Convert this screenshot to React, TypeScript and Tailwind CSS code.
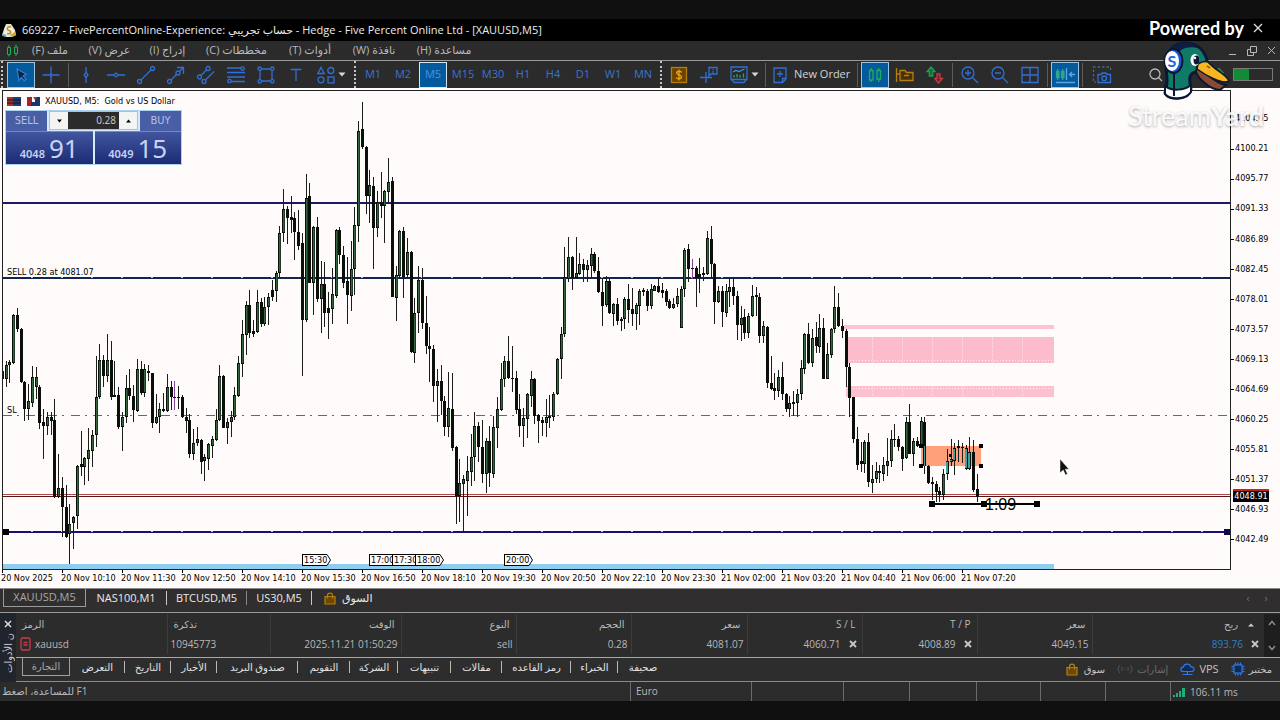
import React from "react";

/* high, body top, body bottom, low, kind: g = rising, b = falling, p = highlighted, t = inside the order block */
const CANDLES = `368 371 379 380 b|361 365 379 387 g|360 362 365 383 g|314 315 363 364 g|308 315 329 332 b|328 329 382 383 b|381 382 409 421 b|384 401 409 420 g|366 377 403 407 g|367 377 387 399 g|385 387 423 429 b|409 422 426 459 b|412 417 426 435 g|412 417 421 435 b|399 420 497 498 b|454 488 497 498 g|477 488 507 537 b|485 507 537 538 b|504 524 534 564 g|516 517 523 549 g|465 466 516 529 g|431 464 467 476 b|457 458 467 485 g|428 450 459 481 g|430 435 451 467 g|356 397 435 447 g|344 360 397 399 g|355 360 376 387 b|334 360 376 382 g|341 360 397 400 b|361 395 397 397 b|387 395 427 429 b|412 417 427 451 g|375 388 417 423 g|369 388 396 400 b|385 396 410 422 b|359 369 411 412 g|361 369 393 395 b|364 369 393 397 g|365 371 373 381 b|373 373 423 428 b|394 417 423 424 g|403 409 417 433 g|393 409 411 412 b|374 387 411 412 g|381 387 397 410 b|381 397 398 410 p|386 397 398 409 b|395 397 417 418 b|408 417 421 433 b|414 420 454 458 b|429 443 454 460 g|427 439 443 446 g|439 440 462 474 b|454 457 461 481 g|443 444 459 470 g|436 439 446 458 g|409 420 440 441 g|365 376 420 421 g|375 376 428 428 b|418 422 428 444 g|411 417 422 437 g|387 395 417 420 g|356 363 396 397 g|320 334 364 377 g|301 305 335 355 g|290 305 333 338 b|320 331 334 337 b|290 302 332 333 g|298 302 324 327 b|297 307 324 326 g|293 297 307 325 g|280 290 297 301 b|271 273 291 302 g|226 233 273 277 g|189 209 233 242 g|206 209 218 244 b|196 217 220 233 b|212 218 232 260 b|210 232 246 250 b|233 243 320 376 b|174 198 320 322 g|183 196 283 283 b|226 227 283 315 g|217 227 299 302 b|261 284 299 333 g|262 284 313 327 b|292 308 313 339 b|268 294 309 324 g|229 230 296 298 g|227 230 255 264 b|246 255 283 288 b|257 281 295 324 b|241 269 296 311 g|207 225 269 295 g|121 131 226 242 g|102 129 147 149 b|146 147 196 214 b|170 185 196 223 g|177 186 228 269 b|191 202 228 237 g|172 202 206 218 b|190 191 206 243 g|158 182 192 202 g|177 181 297 297 b|266 275 298 321 g|230 231 276 279 g|227 231 277 298 b|238 252 275 277 g|251 252 352 353 b|298 313 353 363 g|266 280 313 333 g|268 280 323 329 b|296 323 346 354 b|327 346 349 382 b|345 349 386 402 b|369 381 386 422 g|365 381 401 415 b|396 401 427 436 b|372 408 427 437 g|373 409 448 451 b|446 447 496 524 b|459 483 496 522 g|475 479 484 531 g|456 471 481 516 g|434 457 472 486 g|412 426 457 481 g|422 426 447 462 b|420 447 474 483 b|438 441 474 493 g|426 441 473 487 b|416 427 474 478 g|397 409 428 448 g|363 379 410 411 g|356 361 379 387 g|336 361 378 379 b|346 378 379 392 b|371 378 410 414 b|394 409 426 437 b|408 418 426 447 g|393 394 419 438 g|371 379 396 407 g|378 379 416 424 b|414 415 421 443 b|417 420 423 436 b|399 417 423 437 g|395 416 418 428 b|392 394 417 421 g|358 359 394 395 g|327 334 359 379 g|247 277 334 337 g|237 257 279 282 g|256 257 278 290 b|237 273 278 279 g|253 264 274 275 g|259 264 270 282 b|260 265 270 282 g|248 254 266 277 g|252 254 271 273 b|257 271 292 293 b|279 292 306 326 b|276 281 305 307 g|278 281 313 314 b|303 304 314 326 g|298 304 321 325 b|317 319 321 331 b|297 299 319 329 g|284 299 310 323 b|288 309 314 326 b|303 305 314 330 g|289 291 306 325 g|288 290 292 296 b|289 291 306 311 b|284 289 306 309 g|285 286 291 291 g|278 286 292 293 b|283 290 293 298 b|289 291 302 306 b|299 301 308 309 b|298 304 308 309 g|288 296 304 307 g|286 289 328 328 g|248 250 289 297 g|244 249 269 282 b|259 268 269 279 p|266 268 278 307 b|258 274 278 293 b|267 273 275 281 b|231 238 274 275 g|226 239 264 278 b|263 264 302 324 b|286 291 302 303 g|286 291 312 327 b|284 291 313 317 g|278 287 292 307 g|278 287 296 305 b|291 296 325 340 b|306 318 325 341 g|309 317 333 339 b|313 316 333 338 g|285 296 316 317 g|287 295 297 316 b|293 297 336 343 b|321 326 336 343 g|326 327 383 388 b|356 383 389 390 b|373 388 391 400 b|370 377 391 397 g|362 377 394 400 b|393 394 409 412 b|396 403 409 417 g|391 402 404 416 b|389 394 403 417 g|360 368 394 400 g|333 334 369 374 g|323 334 363 364 b|329 338 363 367 g|322 337 346 353 b|314 328 347 353 g|318 328 379 379 b|343 354 379 379 g|328 329 355 358 g|286 307 329 333 g|293 307 326 327 b|319 326 331 338 b|329 331 367 387 b|363 367 398 417 b|397 397 439 443 b|427 439 465 470 b|442 461 464 472 b|440 442 464 473 g|433 442 482 487 b|465 479 483 493 g|462 471 479 483 g|465 471 473 483 b|457 465 474 481 g|438 461 466 476 g|430 439 461 467 g|424 439 440 447 b|436 439 447 451 b|446 447 459 471 b|417 422 458 459 g|404 422 454 454 b|438 441 454 466 g|437 441 446 447 b|417 421 445 445 g|417 422 466 474 b|465 466 483 484 b|477 482 484 500 b|481 484 492 502 b|487 491 495 502 b|469 474 495 500 g|449 461 474 480 t|439 459 462 466 t|443 448 461 475 t|440 446 448 462 b|443 447 448 463 b|445 448 469 470 t|437 452 469 470 t|440 452 490 492 b|474 489 497 502 b`
  .split("|")
  .map((row) => row.split(" "));

const FILL: Record<string, string> = { g: "#35663e", b: "#000000", p: "#8a3f9a", t: "#3aa3a3" };

const PRICES = ["4104.65", "4100.21", "4095.77", "4091.33", "4086.89", "4082.45", "4078.01", "4073.57", "4069.13", "4064.69", "4060.25", "4055.81", "4051.37", "4046.93", "4042.49"];

const TIMES = ["20 Nov 2025", "20 Nov 10:10", "20 Nov 11:30", "20 Nov 12:50", "20 Nov 14:10", "20 Nov 15:30", "20 Nov 16:50", "20 Nov 18:10", "20 Nov 19:30", "20 Nov 20:50", "20 Nov 22:10", "20 Nov 23:30", "21 Nov 02:00", "21 Nov 03:20", "21 Nov 04:40", "21 Nov 06:00", "21 Nov 07:20"];

const MENU = [
  { label: "ملف (F)", w: "w-[58px]" },
  { label: "عرض (V)", w: "w-[61px]" },
  { label: "إدراج (I)", w: "w-[55px]" },
  { label: "مخططات (C)", w: "w-[83px]" },
  { label: "أدوات (T)", w: "w-[64px]" },
  { label: "نافذة (W)", w: "w-[64px]" },
  { label: "مساعدة (H)", w: "w-[76px]" },
];

const TOOL_TABS = [
  { label: "التعرض", w: "w-[55px]" },
  { label: "التاريخ", w: "w-[46px]" },
  { label: "الأخبار", w: "w-[46px]" },
  { label: "صندوق البريد", w: "w-[81px]" },
  { label: "التقويم", w: "w-[52px]" },
  { label: "الشركة", w: "w-[48px]" },
  { label: "تنبيهات", w: "w-[53px]" },
  { label: "مقالات", w: "w-[51px]" },
  { label: "رمز القاعده", w: "w-[69px]" },
  { label: "الخبراء", w: "w-[47px]" },
  { label: "صحيفة", w: "w-[50px]" },
];

const FLAGS = [
  { t: "15:30", x: 299 },
  { t: "17:00", x: 366 },
  { t: "17:30", x: 389 },
  { t: "18:00", x: 412 },
  { t: "20:00", x: 501 },
];

const BLUE = "#2f6fd6";

function Icon({ children, color = BLUE, w = 20, fill = "none" }: { children: React.ReactNode; color?: string; w?: number; fill?: string }) {
  return (
    <svg width={w} height="20" viewBox={`0 0 ${w} 20`} fill={fill} stroke={color} strokeWidth="1.3" className="shrink-0" aria-hidden="true">
      {children}
    </svg>
  );
}

function Tool({ label, active, children }: { label: string; active?: boolean; children: React.ReactNode }) {
  return (
    <button
      aria-label={label}
      className={
        active
          ? "mx-px flex h-[26px] w-7 shrink-0 items-center justify-center border border-[#9cc4e4] bg-[#055a9c]"
          : "flex h-[26px] w-[30px] shrink-0 items-center justify-center"
      }
    >
      {children}
    </button>
  );
}

function Frame({ label, active }: { label: string; active?: boolean }) {
  return (
    <button
      className={
        active
          ? "mx-px h-[26px] w-7 shrink-0 border border-[#d4e6f4] bg-[#055a9c] text-[11px] text-[#4a90e8]"
          : "h-[26px] w-[30px] shrink-0 text-[11px] text-[#3b74d0]"
      }
    >
      {label}
    </button>
  );
}

const Sep = () => <span className="mx-0.5 h-6 w-px shrink-0 bg-[#5c5c5c]" />;
const Grip = () => <span className="mx-0.5 h-[27px] w-0 shrink-0 border-l-2 border-dotted border-[#c8c8c8]" />;
const Caret = () => (
  <svg width="8" height="5" viewBox="0 0 8 5" className="-ml-[3px] shrink-0" aria-hidden="true">
    <path d="M0.5 0.5H7.5L4 4.5Z" fill="#d8d8d8" />
  </svg>
);

function Bag() {
  return (
    <svg width="12" height="13" viewBox="0 0 12 13" fill="#6b4700" stroke="#b87e0c" strokeWidth="1.2" aria-hidden="true">
      <path d="M1 4.5H11V12H1Z" />
      <path d="M3.5 6.5V3.2C3.5 0.3 8.5 0.3 8.5 3.2V6.5" fill="none" />
    </svg>
  );
}

function Toolbar() {
  return (
    <div className="flex h-[27px] items-center overflow-hidden bg-[#2b2b2b] pl-px">
      <span className="h-[27px] w-0 shrink-0 border-l-2 border-dotted border-[#c8c8c8]" />
      <span className="w-[3px] shrink-0" />
      <Tool label="Cursor" active>
        <Icon color="#2f7ad8"><path d="M6 4L8 15.500L10.300 12.600L13.300 15.800L15.200 14L12.200 11L15.200 9.300Z" fill="#0d2238" /></Icon>
      </Tool>
      <Tool label="Crosshair"><Icon><path d="M10 1.500V8M10 12V18.500M1.500 10H8M12 10H18.500M8.500 10L10 8.500L11.500 10L10 11.500Z" /></Icon></Tool>
      <Sep />
      <Tool label="Vertical line"><Icon><path d="M10 2V7.500M10 12.500V18" /><path d="M10 7.500L12 10L10 12.500L8 10Z" /></Icon></Tool>
      <Tool label="Horizontal line"><Icon><path d="M1 10H7.500M12.500 10H19" /><path d="M7.500 10L10 8L12.500 10L10 12Z" /></Icon></Tool>
      <Tool label="Trendline"><Icon><circle cx="3.500" cy="16.500" r="2" /><circle cx="16.500" cy="3.500" r="2" /><path d="M5 15L15 5" /></Icon></Tool>
      <Tool label="Arrow line"><Icon><circle cx="3.500" cy="16.500" r="2" /><circle cx="12" cy="8" r="2" /><path d="M5 15L10.500 9.500M13.500 6.500L18 2M11 2.500H17.500V9" /></Icon></Tool>
      <Tool label="Channel"><Icon><circle cx="3.500" cy="12" r="2" /><circle cx="12" cy="3.500" r="2" /><circle cx="8" cy="16.500" r="2" /><path d="M5 10.500L10.500 5M9.500 15L18 6.500" /></Icon></Tool>
      <Tool label="Fibonacci"><Icon><path d="M1 3H15M1 7.500H19M1 12H19M5 16.500H19" /><circle cx="16.500" cy="3.500" r="1.700" /><circle cx="3.500" cy="16" r="1.700" /></Icon></Tool>
      <Tool label="Rectangle"><Icon><path d="M5.500 4H14.500M5.500 16H14.500M4 5.500V14.500M16 5.500V14.500" /><circle cx="3.700" cy="3.700" r="1.700" /><circle cx="16.300" cy="3.700" r="1.700" /><circle cx="3.700" cy="16.300" r="1.700" /><circle cx="16.300" cy="16.300" r="1.700" /></Icon></Tool>
      <Tool label="Text"><Icon><path d="M4.500 4.500H15.500M10 4.500V16" /></Icon></Tool>
      <Tool label="Shapes"><Icon><path d="M5 2.500L8.200 8.500H1.800Z" /><circle cx="14.800" cy="5.500" r="3" /><circle cx="5" cy="14.800" r="3" /><rect x="12" y="12" width="6" height="6" /></Icon></Tool>
      <Caret />
      <span className="w-1.5 shrink-0" />
      <Grip />
      {["M1", "M2", "M5", "M15", "M30", "H1", "H4", "D1", "W1", "MN"].map((f) => (
        <Frame key={f} label={f} active={f === "M5"} />
      ))}
      <Grip />
      <Tool label="Accounts">
        <Icon color="#b87e0c"><rect x="2.500" y="2.500" width="15" height="15" fill="#6b4400" /><path d="M12.500 7.500C12 5.800 7.700 5.700 7.700 8C7.700 10.300 12.500 9.500 12.500 12C12.500 14.300 8 14.200 7.300 12.500M10 4.500V15.500" stroke="#eda41c" /></Icon>
      </Tool>
      <Tool label="Data window"><Icon><path d="M7 7V18M1 12.500H13M10 2.500H18V9H12L10 11Z" /><path d="M14 4V5M14 6V8" /></Icon></Tool>
      <Tool label="Indicators"><Icon><path d="M2 2H18V14.500H2ZM3 15L5 17.500H15L17 15" /><path d="M4 7L7 5.500L10 6.500L15.500 4" stroke="#3f9ad0" /><path d="M5 12.500V10M8 12.500V9M11 12.500V10M14.500 12.500V8.500" stroke="#23a860" /></Icon></Tool>
      <Caret />
      <span className="w-1 shrink-0" />
      <Sep />
      <button className="flex h-[26px] w-[87px] shrink-0 items-center gap-1 pl-0.5 text-[11px] text-[#d4d4d4]">
        <Icon><path d="M4 3H16V14L12.500 17.500H4ZM16 13.500H12.500V17.500M10 6V12M7 9H13" /></Icon>
        <span className="whitespace-nowrap">New Order</span>
      </button>
      <Sep />
      <Tool label="Candlesticks" active>
        <Icon color="#1fae5c"><path d="M4.500 5.500H8V15H4.500ZM12 5.500H15.500V14H12ZM6.200 3V5.500M6.200 15V17M13.700 3V5.500M13.700 14V17" /></Icon>
      </Tool>
      <Tool label="Templates"><Icon color="#b87e0c"><path d="M1.500 3V17M1.500 9H5" /><path d="M5 5.500H10L11.500 7.500H18V15.500H5ZM9 10.500H14" fill="#4a3208" /></Icon></Tool>
      <Tool label="Trade levels">
        <Icon color="#1f9a50"><path d="M6 2L10 6.500H7.700V11H4.300V6.500H2Z" fill="#1b6a3a" /><path d="M13.500 18L9.800 13.500H12V9H15V13.500H17.500Z" stroke="#c63c44" fill="#6a2026" /></Icon>
      </Tool>
      <Sep />
      <Tool label="Zoom in"><Icon><circle cx="8" cy="8" r="6" /><path d="M12.500 12.500L18 18M8 5V11M5 8H11" /></Icon></Tool>
      <Tool label="Zoom out"><Icon><circle cx="8" cy="8" r="6" /><path d="M12.500 12.500L18 18M5 8H11" /></Icon></Tool>
      <Tool label="Tile windows"><Icon><path d="M2 2.500H18V17.500H2ZM10 2.500V17.500M2 10H18" /></Icon></Tool>
      <Sep />
      <Tool label="Chart shift" active>
        <Icon color="#2aa88c" w={22}><path d="M2.500 6.500H5V12.500H2.500ZM7.500 6.500H10V12.500H7.500ZM3.700 4V15M8.700 4V15" /><path d="M12.500 3V15M21 9.500H15.500M18 7L15.500 9.500L18 12M2 17.500H21" stroke="#5fa4e8" /></Icon>
      </Tool>
      <Sep />
      <span className="w-0.5 shrink-0" />
      <Tool label="Screenshot">
        <Icon><path d="M1.500 7V2H18.500V7M1.500 9V17H4" strokeDasharray="2.500 2" stroke="#4a6690" /><path d="M6 9.500H9L10.200 8H14L15.200 9.500H18.500V17.500H6Z" /><circle cx="12.200" cy="13.300" r="2.300" /></Icon>
      </Tool>
      <span className="flex-1" />
      <button aria-label="Search" className="mr-12 flex items-center">
        <Icon color="#b8b8b8" w={18}><circle cx="8" cy="9" r="5" /><path d="M11.500 12.500L15 16" /></Icon>
      </button>
      <svg width="12" height="16" viewBox="0 0 12 16" className="mr-2 shrink-0" aria-hidden="true">
        <path d="M6 1L10.500 6H8V10H4V6H1.500Z" fill="#1b6a3a" stroke="#1f9a50" />
      </svg>
      <span className="mr-[7px] flex h-[13px] w-10 shrink-0 border border-[#7a7a7a]"><span className="w-[15px] bg-[#138a35]" /></span>
    </div>
  );
}

function OneClick() {
  return (
    <div className="absolute left-0.5 top-[19px] flex w-[177px] flex-col border border-[#a9d3f3] bg-[#d6ecfb]">
      <div className="flex h-5 items-stretch">
        <button className="w-[41px] shrink-0 bg-[#495fa5] text-[11px] text-[#b6bfe6]">SELL</button>
        <div className="mx-0.5 mb-px flex min-w-0 flex-1 border border-[#bcbcbc]">
          <button aria-label="Decrease volume" className="flex w-[18px] shrink-0 items-center justify-center bg-[#f4f4f4]"><svg width="5" height="4" viewBox="0 0 5 4"><path d="M0 0.500H5L2.500 3.500Z" /></svg></button>
          <input aria-label="Volume" defaultValue="0.28" className="w-0 min-w-0 flex-1 bg-[#2b2b2b] pr-[3px] text-right text-[10px] text-[#c4c4c4] outline-none [font-family:'Noto_Sans',sans-serif]" />
          <button aria-label="Increase volume" className="flex w-[18px] shrink-0 items-center justify-center bg-[#f4f4f4]"><svg width="5" height="4" viewBox="0 0 5 4"><path d="M0 3.500H5L2.500 0.500Z" /></svg></button>
        </div>
        <button className="w-[41px] shrink-0 bg-[#495fa5] text-[11px] text-[#b6bfe6]">BUY</button>
      </div>
      <div className="flex h-[33px] gap-0.5 text-[#c9d2f2] [font-family:'Noto_Sans',sans-serif]">
        <div className="flex flex-1 items-baseline justify-center gap-1 border-t border-[#7486c4] bg-gradient-to-b from-[#41569f] to-[#1c2b74]">
          <span className="text-[11px] font-semibold">4048</span>
          <span className="text-[26px] leading-8">91</span>
        </div>
        <div className="flex flex-1 items-baseline justify-center gap-1 border-t border-[#7486c4] bg-gradient-to-b from-[#41569f] to-[#1c2b74]">
          <span className="text-[11px] font-semibold">4049</span>
          <span className="text-[26px] leading-8">15</span>
        </div>
      </div>
    </div>
  );
}

function Chart() {
  const breaks = Array.from({ length: 40 }, (_, k) => 32 + 30 * k);
  return (
    <main className="flex flex-1 flex-col bg-[#fffbfb] pl-0.5 pt-0.5 text-[9px] text-black [font-family:'DejaVu_Sans_Condensed','DejaVu_Sans',sans-serif]">
      <div className="flex flex-1">
        <div className="relative h-[480px] min-w-0 flex-1 overflow-hidden border border-[#222]">
          <svg className="absolute inset-0 h-full w-full" shapeRendering="crispEdges" role="img" aria-label="XAUUSD five minute candlestick chart">
            <g transform="translate(-3,-91)">
              <rect x="3" y="564" width="1051" height="5" fill="#8fcdf0" />
              <rect x="844" y="325" width="210" height="4" fill="#fdc3d0" />
              <rect x="845" y="337" width="209" height="26" fill="#fdbccb" />
              <rect x="846" y="386" width="208" height="11" fill="#fcc0ce" />
              <path d="M847 360.500H1054M847 388.500H1054" stroke="#fff" strokeOpacity=".7" strokeDasharray="1 2" />
              <path d="M872.500 337V397M902.500 337V397M932.500 337V397M962.500 337V397M992.500 337V397M1022.500 337V397" stroke="#fff" strokeOpacity=".35" strokeDasharray="3 1" />
              <rect x="921" y="446" width="60" height="20" fill="#ffa07a" />
            </g>
            <rect x="0" y="111" width="100%" height="2" fill="#1b1a66" />
            <rect x="0" y="186" width="100%" height="2" fill="#10264e" />
            <rect x="0" y="403" width="100%" height="1" fill="#b04848" />
            <rect x="0" y="405" width="100%" height="1" fill="#5a1414" />
            <rect x="0" y="440" width="100%" height="2" fill="#1c0c78" />
            <line x1="0" y1="324.500" x2="100%" y2="324.500" stroke="#c43c50" strokeDasharray="9 5 2 6.500" />
            <g transform="translate(-3,-91)">
              {breaks.map((x) => (
                <path key={x} d={`M${x - 1} 277.500H${x + 1}M${x - 1} 531.500H${x + 1}`} stroke="#fff" strokeOpacity=".75" />
              ))}
              {CANDLES.map(([h, t, b, l, kind], i) => {
                const x = Math.floor(2.3 + 3.75 * i);
                const top = Number(t);
                const height = Math.max(1, Number(b) - top);
                return (
                  <g key={i}>
                    <rect x={x} y={h} width="1" height={Number(l) - Number(h)} fill={kind === "p" ? "#8a3f9a" : "#1c1c1c"} />
                    <rect x={x - 1} y={top} width="3" height={height} fill="#0a0f0a" />
                    {kind !== "b" && height > 2 && <rect x={x} y={top + 1} width="1" height={height - 2} fill={FILL[kind]} />}
                    {kind === "g" && height > 6 && <rect x={x + 1} y={top + 1} width="1" height={height - 2} fill="#1d3a24" />}
                    {kind === "t" && <rect x={x - 1} y={top + 1} width="2" height={Math.max(1, height - 2)} fill={FILL.t} />}
                  </g>
                );
              })}
              <rect x="924" y="446" width="1" height="20" fill="#3aa3a3" />
              <path d="M919 444h4v4h-4zM979 444h4v4h-4zM919 464h4v4h-4zM979 464h4v4h-4zM949 454h3v3h-3z" />
              <rect x="932" y="503" width="105" height="2" />
              <path d="M929 501h6v6h-6zM981 501h6v6h-6zM1034 501h6v6h-6zM3 529h6v6H3z" />
              <path d="M1060 459V473L1063.200 470L1065.500 475L1067.500 474L1065.300 469.200H1069Z" fill="#111" stroke="#fff" strokeWidth=".5" shapeRendering="auto" />
            </g>
          </svg>
          <span className="absolute right-0 top-[438px] size-1.5 bg-[#0c0a48]" />
          {FLAGS.map((f) => (
            <span key={f.t} className="absolute top-[463px] flex h-3" style={{ left: f.x }}>
              <span className="border border-r-0 border-black bg-[#fffbfb] pl-px leading-[10px]">{f.t}</span>
              <svg width="4" height="12" viewBox="0 0 4 12"><path d="M0 0.500L3.500 6L0 11.500" fill="#fffbfb" stroke="#000" /></svg>
            </span>
          ))}
          <div className="absolute left-1 top-1 flex items-center gap-1 leading-3">
            <svg width="34" height="9" viewBox="0 0 34 9" aria-hidden="true">
              <rect width="14" height="9" fill="#1c3f7c" /><rect width="6" height="9" fill="#a5342c" /><path d="M0 3H14M0 6H14" stroke="#161616" />
              <rect x="20" width="5" height="9" fill="#a5242c" /><rect x="28" width="5" height="9" fill="#17386e" /><rect x="24" y="5" width="6" height="4" fill="#17386e" /><path d="M26 0L28 3L30 0Z" fill="#c03030" />
            </svg>
            <span className="whitespace-pre text-[9px]">XAUUSD, M5:  Gold vs US Dollar</span>
          </div>
          <OneClick />
          <span className="absolute left-1 top-[175px] leading-3">SELL 0.28 at 4081.07</span>
          <span className="absolute left-1 top-[313px] leading-3">SL</span>
          <span className="absolute left-[982px] top-[405px] text-[16px] leading-[18px] [font-family:'Liberation_Sans',sans-serif]">1:09</span>
        </div>
        <div className="relative w-[49px] shrink-0">
          <div className="mt-3.5 flex h-[451px] flex-col">
            {PRICES.map((p) => (
              <span key={p} className="flex flex-1 items-center gap-px">
                <span className="h-px w-[3px] bg-black" />
                {p}
              </span>
            ))}
          </div>
          <span className="absolute left-0.5 top-[399px] h-[13px] w-9 border-t-2 border-[#c82020] bg-black text-center leading-[11px] text-white">4048.91</span>
        </div>
      </div>
      <div className="flex h-[18px]">
        {TIMES.map((t) => (
          <span key={t} className="w-[60px] shrink-0 whitespace-nowrap">
            <span className="block h-[3px] w-px bg-black" />
            <span className="-ml-px block leading-[11px]">{t}</span>
          </span>
        ))}
      </div>
    </main>
  );
}

function ChartTabs() {
  return (
    <nav className="flex h-[25px] items-start border-b border-t border-b-[#9a9a9a] border-t-[#8a8a8a] bg-[#302e2e] pl-[3px] text-[11px] text-[#eaeaea]">
      <button className="h-[18px] w-[83px] border border-t-0 border-[#9a9a9a] text-[#a8a8a8]">XAUUSD,M5</button>
      <button className="h-[18px] w-20">NAS100,M1</button>
      <span className="mt-0.5 h-3.5 w-px bg-[#c8c8c8]" />
      <button className="h-[18px] w-[79px]">BTCUSD,M5</button>
      <span className="mt-0.5 h-3.5 w-px bg-[#888]" />
      <button className="h-[18px] w-16">US30,M5</button>
      <span className="mt-0.5 h-3.5 w-px bg-[#c8c8c8]" />
      <button className="flex h-[18px] items-center gap-1.5 pl-3"><Bag />السوق</button>
      <span className="flex-1" />
      <button aria-label="Scroll tabs left" className="w-5 text-[10px] leading-[18px] text-[#777]">‹</button>
      <button aria-label="Scroll tabs right" className="mr-1.5 w-4 text-[10px] leading-[18px] text-[#777]">›</button>
    </nav>
  );
}

const TH = "h-5 border-r border-[#3c3c3c] pr-1.5 text-right font-normal";
const TD = "h-5 border-r border-[#3c3c3c] pr-[3px] text-right";

function Close({ label }: { label: string }) {
  return (
    <button aria-label={label} className="ml-2 mr-0.5">
      <svg width="8" height="8" viewBox="0 0 8 8"><path d="M1 1L7 7M7 1L1 7" stroke="#c8c8c8" strokeWidth="1.800" /></svg>
    </button>
  );
}

function Toolbox() {
  return (
    <section className="flex h-[69px] bg-[#2c2c2c]">
      <div className="flex w-4 shrink-0 flex-col items-center bg-[#20242c] pt-1.5">
        <button aria-label="Close toolbox" className="mb-1 flex h-2.5 items-center">
          <svg width="8" height="8" viewBox="0 0 8 8"><path d="M1 1L7 7M7 1L1 7" stroke="#e8e8e8" strokeWidth="1.400" /></svg>
        </button>
        <div className="flex h-[45px] items-start overflow-hidden">
          <span dir="rtl" className="rotate-180 whitespace-nowrap text-[10px] leading-4 text-[#c8ccd4] [writing-mode:vertical-rl]">ن الأدوات</span>
        </div>
      </div>
      <div className="flex min-w-0 flex-1 flex-col">
        <div className="flex h-[45px] border-b border-[#a8a8a8] pt-px">
          <table className="h-10 flex-1 table-fixed border-collapse text-[10px] text-[#b8b8b8]">
            <colgroup>
              <col className="w-[151px]" /><col className="w-[103px]" /><col className="w-[131px]" /><col className="w-[115px]" /><col className="w-[115px]" />
              <col className="w-[116px]" /><col className="w-[115px]" /><col className="w-[115px]" /><col className="w-[115px]" /><col />
            </colgroup>
            <thead>
              <tr>
                <th className="h-5 border-r border-[#3c3c3c] pl-1.5 text-left font-normal">الرمز</th>
                <th className="h-5 border-r border-[#3c3c3c] pl-1.5 text-left font-normal">تذكرة</th>
                <th className={TH}>الوقت</th>
                <th className={TH}>النوع</th>
                <th className={TH}>الحجم</th>
                <th className={TH}>سعر</th>
                <th className={TH}>S / L</th>
                <th className={TH}>T / P</th>
                <th className={TH}>سعر</th>
                <th className="h-5 pr-2.5 text-right font-normal">
                  <span className="mr-2.5">ربح</span>
                  <svg width="6" height="4" viewBox="0 0 6 4" className="inline-block align-middle"><path d="M0 3.500H6L3 0.500Z" fill="#d0d0d0" /></svg>
                </th>
              </tr>
            </thead>
            <tbody>
              <tr>
                <td className="h-5 border-r border-[#3c3c3c] pl-1 text-left">
                  <span className="flex items-center gap-1">
                    <svg width="11" height="14" viewBox="0 0 11 14" fill="none" stroke="#cc3a48" strokeWidth="1.300"><rect x="1" y="1" width="9" height="12" rx="1.500" /><path d="M3.500 5.500H7.500M3.500 8H7.500" /></svg>
                    xauusd
                  </span>
                </td>
                <td className="h-5 border-r border-[#3c3c3c] pl-[3px] text-left">10945773</td>
                <td className={TD}>2025.11.21 01:50:29</td>
                <td className={TD}>sell</td>
                <td className={TD}>0.28</td>
                <td className={TD}>4081.07</td>
                <td className={TD}>4060.71<Close label="Remove stop loss" /></td>
                <td className={TD}>4008.89<Close label="Remove take profit" /></td>
                <td className={TD}>4049.15</td>
                <td className="h-5 pr-[3px] text-right text-[#2e7fc8]">893.76<Close label="Close position" /></td>
              </tr>
            </tbody>
          </table>
          <div className="flex w-4 shrink-0 flex-col items-center justify-between bg-[#1e1e1e] py-1.5">
            <svg width="8" height="6" viewBox="0 0 8 6" fill="none" stroke="#8a8a8a" strokeWidth="1.500"><path d="M1 5L4 1.500L7 5" /></svg>
            <svg width="8" height="6" viewBox="0 0 8 6" fill="none" stroke="#8a8a8a" strokeWidth="1.500"><path d="M1 1L4 4.500L7 1" /></svg>
          </div>
        </div>
        <div className="flex h-6 items-start border-b border-[#8a8a8a] bg-[#2e2d2d] pl-1.5 text-[10px] text-[#e4e4e4]">
          <button className="h-[18px] w-12 shrink-0 border border-t-0 border-[#a0a0a0] text-[#a8a8a8]">التجارة</button>
          {TOOL_TABS.map((t, i) => (
            <React.Fragment key={t.label}>
              {i > 0 && <span className="-ml-px mt-[3px] h-3 w-px shrink-0 bg-[#b8b8b8]" />}
              <button className={`h-[18px] shrink-0 whitespace-nowrap ${t.w}`}>{t.label}</button>
            </React.Fragment>
          ))}
          <span className="flex-1" />
          <div className="flex h-[22px] items-center gap-3 pr-2 text-[10px] text-[#c4c4c4]">
            <button className="flex items-center gap-1.5"><Bag />سوق</button>
            <button className="flex items-center gap-1 text-[#6c6c6c]">
              <svg width="16" height="10" viewBox="0 0 16 10" fill="none" stroke="#555"><path d="M3 1C0.500 3 0.500 7 3 9M13 1C15.500 3 15.500 7 13 9M5.500 3C4.500 4 4.500 6 5.500 7M10.500 3C11.500 4 11.500 6 10.500 7M8 4.500V5.500" /></svg>
              إشارات
            </button>
            <button className="flex items-center gap-1 text-[11px]">
              <svg width="15" height="13" viewBox="0 0 15 13" fill="#0e2b5c" stroke="#2f78e0" strokeWidth="1.200"><path d="M3.500 8.500C0 8.500 0 4.500 3.300 4.200C4 0.300 10 0 10.800 3.800C15 3.500 15 8.500 11.500 8.500Z" /><path d="M7.500 8.500V11.500M2.500 11.500H12.500" /></svg>
              VPS
            </button>
            <button className="flex items-center gap-1">
              <svg width="14" height="14" viewBox="0 0 14 14" fill="#0e2b5c" stroke="#2f78e0" strokeWidth="1.200"><rect x="3" y="3" width="8" height="8" /><path d="M4.500 3V0.500M7 3V0.500M9.500 3V0.500M4.500 11V13.500M7 11V13.500M9.500 11V13.500M3 4.500H0.500M3 7H0.500M3 9.500H0.500M11 4.500H13.500M11 7H13.500M11 9.500H13.500" /></svg>
              مختبر
            </button>
          </div>
        </div>
      </div>
    </section>
  );
}

function StatusBar() {
  return (
    <footer className="flex h-[19px] items-stretch bg-[#2d2c2c] text-[10px] leading-[18px] text-[#b8b8b8]">
      <span className="flex-1 pl-0.5"><span dir="rtl" className="inline-block whitespace-nowrap">F1 للمساعدة، اضغط</span></span>
      <span className="w-[121px] border-l border-[#6c6c6c] pl-[5px]">Euro</span>
      <span className="w-[92px] border-l border-[#6c6c6c]" />
      <span className="w-[66px] border-l border-[#6c6c6c]" />
      <span className="w-[67px] border-l border-[#6c6c6c]" />
      <span className="w-16 border-l border-[#6c6c6c]" />
      <span className="w-[65px] border-l border-[#6c6c6c]" />
      <span className="w-[65px] border-l border-[#6c6c6c]" />
      <span className="flex w-[110px] items-center gap-1 border-l border-[#6c6c6c] pl-0.5 text-[10px]">
        <svg width="13" height="10" viewBox="0 0 13 10" fill="#1fae78"><path d="M0 8h2v2H0zM3 6h2v4H3zM6 4h2v6H6zM9 1h3v9H9z" /></svg>
        106.11 ms
      </span>
    </footer>
  );
}

function Watermark() {
  return (
    <div className="pointer-events-none absolute right-2.5 top-4 flex w-[142px] flex-col text-white [font-family:Lato,'Open_Sans',sans-serif]">
      <div className="ml-[21px] flex items-center gap-[9px]">
        <span className="whitespace-nowrap text-[18px] font-bold leading-6">Powered by</span>
        <svg width="10" height="10" viewBox="0 0 10 10"><path d="M1 1L9 9M9 1L1 9" stroke="#e0e0e0" strokeWidth="1.300" /></svg>
      </div>
      <svg width="70" height="62" viewBox="0 0 70 62" className="ml-8" aria-hidden="true">
        <path d="M6 26C7 9 16 3 25 3C36 3 44 9 47 20C47 28 40 30 33 33C28 36 30 42 31 50C28 60 9 61 5 53C8 44 7 38 6 26Z" fill="#0f7a68" stroke="#0b1733" strokeWidth="3" />
        <path d="M11 9C16 1 33 0 40 9C30 5 20 8 16 16Z" fill="#0e1d40" />
        <path d="M5 46C11 51 24 51 31 45L31 52C25 60 10 60 5 54Z" fill="#fff" stroke="#0b1733" strokeWidth="2" />
        <path d="M37 27C44 30 55 44 66 45L60 50C50 50 38 38 36 32Z" fill="#8a4a34" stroke="#0b1733" strokeWidth="2" />
        <path d="M38 24C43 21 47 20 50 24C56 31 65 33 69 41C62 45 44 34 37 29Z" fill="#fbb520" stroke="#0b1733" strokeWidth="1.500" />
        <path d="M47 26L50 28" stroke="#7a4a10" strokeWidth="1.500" />
        <ellipse cx="35" cy="20" rx="4.500" ry="6" fill="#fff" />
        <ellipse cx="36.500" cy="20" rx="3" ry="4.600" fill="#0b1733" />
        <circle cx="35" cy="18" r="1.200" fill="#fff" />
        <path d="M14 30V56" stroke="#0b1733" strokeWidth="2" />
        <ellipse cx="13.500" cy="21" rx="9" ry="12" fill="#1b57c8" stroke="#0b1733" strokeWidth="2" />
        <ellipse cx="12" cy="21" rx="7" ry="10" fill="#fff" />
        <text x="12" y="27" textAnchor="middle" fontSize="16" fontWeight="700" fill="#1d62e0" fontFamily="Lato, sans-serif">S</text>
      </svg>
      <span className="whitespace-nowrap text-[27px] leading-7 text-white/90 [text-shadow:0_1px_3px_rgba(0,0,0,0.35)]">
        Stream<b>Yard</b>
      </span>
    </div>
  );
}

export default function App() {
  return (
    <div className="relative flex min-h-screen flex-col bg-[#101010] py-[19px] [font-family:'Open_Sans','Noto_Sans','DejaVu_Sans',sans-serif]">
      <header className="flex h-[22px] items-center gap-1.5 bg-black pl-0.5 text-[11px] text-[#ececec]">
        <svg width="14" height="15" viewBox="0 0 14 15" aria-hidden="true">
          <path d="M4 1H9L13 7L14 12L10 14H4L0 12L2 6Z" fill="#d9e4dc" />
          <path d="M3 4L10 3L12 9L6 13L2 10Z" fill="#f3efd8" />
          <path d="M9 4C5 3 4 7 7 7.500C10 8 9 11.500 5 10.500" fill="none" stroke="#b88a28" strokeWidth="1.500" />
          <path d="M8 12L13 9L14 12L10 14Z" fill="#d8a62a" /><path d="M0 11L4 12V14L0 13Z" fill="#4aa6c8" />
        </svg>
        <h1 dir="ltr" className="whitespace-nowrap">669227 - FivePercentOnline-Experience: حساب تجريبي - Hedge - Five Percent Online Ltd - [XAUUSD,M5]</h1>
      </header>
      <div className="flex h-5 items-center border-b border-[#9a9a9a] bg-[#2b2b2b] pl-1.5 text-[11px] text-[#b8b8b8]">
        <svg width="13" height="13" viewBox="0 0 13 13" fill="none" stroke="#1fae5c" className="mr-0.5"><path d="M1.500 3.500H4.500V10.500H1.500ZM8.500 3H11.500V9.500H8.500ZM3 1V3.500M3 10.500V12.500M10 0.500V3M10 9.500V12" /></svg>
        <nav className="flex flex-1">
          {MENU.map((m) => (
            <button key={m.label} dir="rtl" className={`whitespace-nowrap text-center ${m.w}`}>{m.label}</button>
          ))}
        </nav>
        <div className="flex items-center gap-2.5 pr-1">
          <button aria-label="Minimize"><svg width="9" height="9" viewBox="0 0 9 9" stroke="#b8b8b8"><path d="M1 8.500H8" /></svg></button>
          <button aria-label="Restore"><svg width="10" height="10" viewBox="0 0 10 10" fill="none" stroke="#b8b8b8"><path d="M3.500 0.500H9.500V6.500H3.500ZM3.500 3.500H0.500V9.500H6.500V6.500" /></svg></button>
          <button aria-label="Close"><svg width="9" height="9" viewBox="0 0 9 9" stroke="#b8b8b8"><path d="M1 1L8 8M8 1L1 8" /></svg></button>
        </div>
      </div>
      <Toolbar />
      <Chart />
      <ChartTabs />
      <Toolbox />
      <StatusBar />
      <Watermark />
    </div>
  );
}
